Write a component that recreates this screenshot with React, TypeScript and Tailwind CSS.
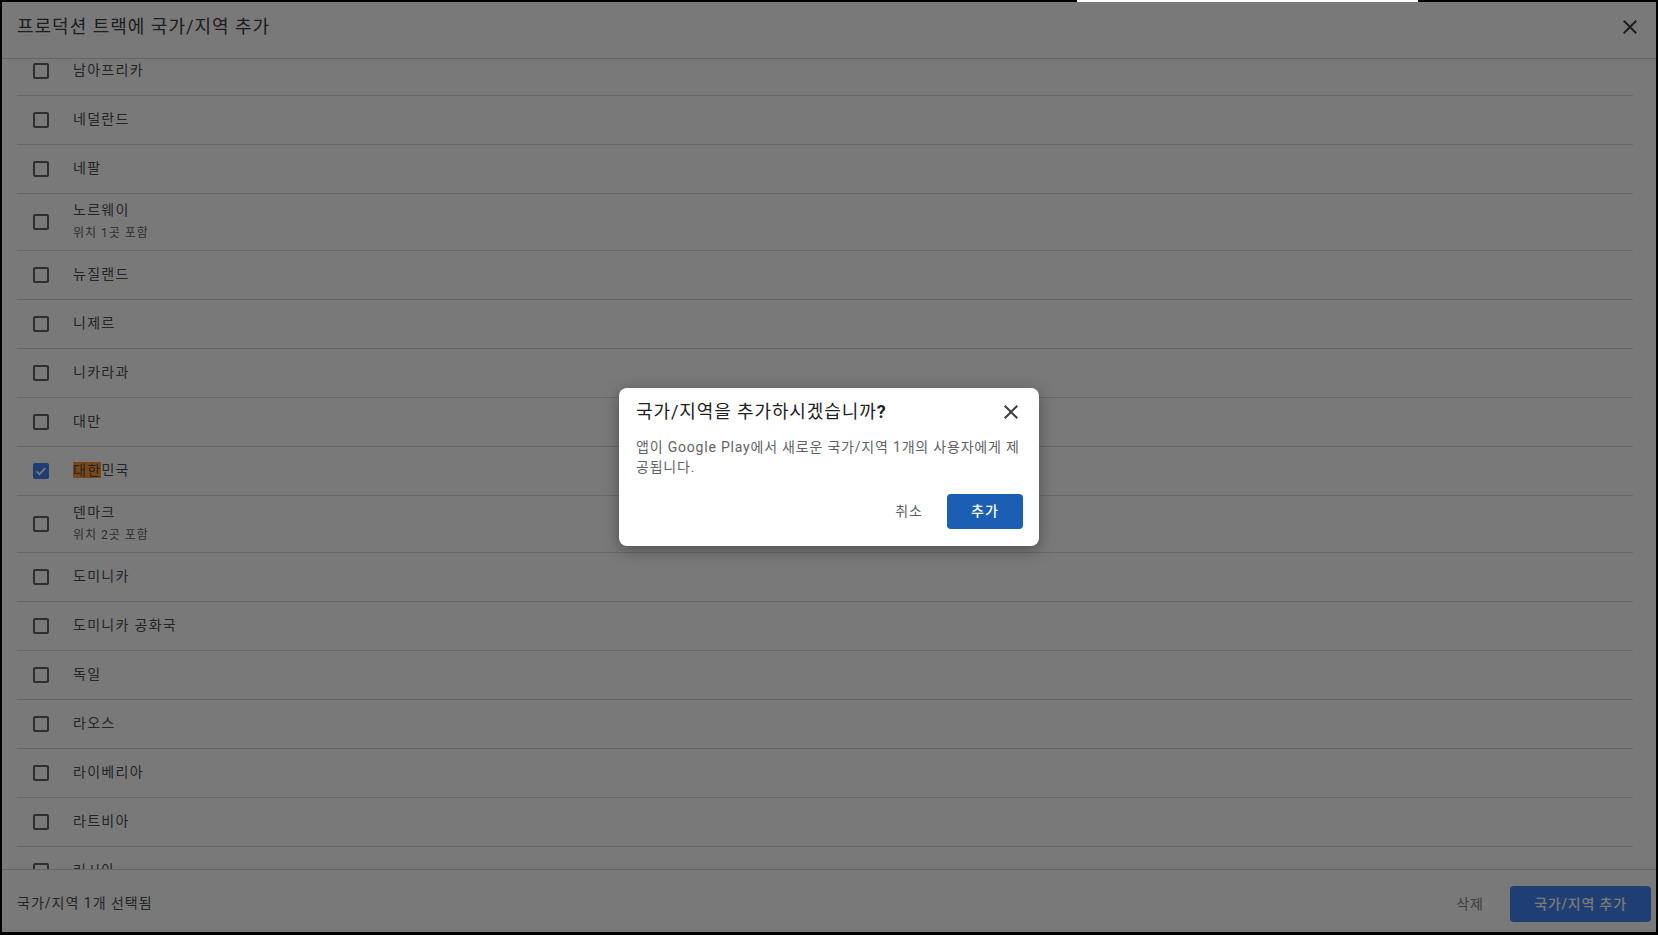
import React from 'react';

const FONT = 'font-[Roboto,"Noto_Sans_CJK_KR",sans-serif]';

type Row = { name: string; sub?: string; checked?: boolean; highlight?: number };

const rows: Row[] = [
  { name: '남아프리카' },
  { name: '네덜란드' },
  { name: '네팔' },
  { name: '노르웨이', sub: '위치 1곳 포함' },
  { name: '뉴질랜드' },
  { name: '니제르' },
  { name: '니카라과' },
  { name: '대만' },
  { name: '대한민국', checked: true, highlight: 2 },
  { name: '덴마크', sub: '위치 2곳 포함' },
  { name: '도미니카' },
  { name: '도미니카 공화국' },
  { name: '독일' },
  { name: '라오스' },
  { name: '라이베리아' },
  { name: '라트비아' },
  { name: '러시아' },
];

function CloseIcon(props: { className?: string }) {
  return (
    <svg viewBox="0 0 24 24" className={props.className} fill="currentColor">
      <path d="M19 6.41L17.59 5 12 10.59 6.41 5 5 6.41 10.59 12 5 17.59 6.41 19 12 13.41 17.59 19 19 17.59 13.41 12z" />
    </svg>
  );
}

function Checkbox(props: { checked?: boolean }) {
  if (props.checked) {
    return (
      <div className="flex h-4 w-4 shrink-0 items-center justify-center rounded-[2px] bg-[#4285f4]">
        <svg viewBox="0 0 24 24" className="h-[14px] w-[14px]" fill="none" stroke="white" strokeWidth="3">
          <path d="M4.5 12.5l5 5 10-10.5" />
        </svg>
      </div>
    );
  }
  return <div className="h-4 w-4 shrink-0 rounded-[2px] border-2 border-[#5f6368]" />;
}

function CountryRow({ row }: { row: Row }) {
  const label =
    row.highlight != null ? (
      <>
        <span className="bg-[#ff9632]">{row.name.slice(0, row.highlight)}</span>
        {row.name.slice(row.highlight)}
      </>
    ) : (
      row.name
    );
  return (
    <div
      className={`flex items-center border-b border-[#dadce0] ${row.sub ? 'h-[57px]' : 'h-[49px]'}`}
    >
      <div className="ml-4">
        <Checkbox checked={row.checked} />
      </div>
      <div className="mb-[2px] ml-6 flex flex-col">
        <div className="text-[14px] leading-5 tracking-[1.3px] text-[#4a4e52]">{label}</div>
        {row.sub ? (
          <div className="mt-[4px] text-[12px] leading-[18px] tracking-[1px] text-[#5f6368]">{row.sub}</div>
        ) : null}
      </div>
    </div>
  );
}

export default function App() {
  return (
    <div className={`relative h-[935px] w-[1658px] overflow-hidden bg-black pt-[2px] pr-[2px] pb-[3px] pl-[2px] ${FONT}`}>
      <div className="absolute top-0 left-[1077px] h-[2px] w-[341px] bg-white" />
      <div className="relative flex h-full w-full flex-col bg-white">
        {/* header */}
        <div className="flex h-[57px] shrink-0 items-start justify-between border-b border-[#d2d4d8] pt-[13px] pr-[14px] pl-[15px]">
          <div className="text-[18px] leading-6 tracking-[1px] text-[#3c4043]">프로덕션 트랙에 국가/지역 추가</div>
          <CloseIcon className="h-6 w-6 text-[#3c4043]" />
        </div>

        {/* list */}
        <div className="flex-1 overflow-hidden pr-[23px] pl-[15px]">
          <div className="-mt-[12px]">
            {rows.map((r) => (
              <CountryRow key={r.name} row={r} />
            ))}
          </div>
        </div>

        {/* footer */}
        <div className="flex h-[63px] shrink-0 items-start justify-between border-t border-[#d2d4d8] pt-[16px] pr-[5px] pl-[15px]">
          <div className="mt-[7px] text-[14px] leading-5 tracking-[1px] text-[#4a4e52]">국가/지역 1개 선택됨</div>
          <div className="flex items-start gap-[26px]">
            <div className="mt-[8px] text-[14px] leading-5 tracking-[1px] text-[#80868b]">삭제</div>
            <div className="flex h-9 w-[141px] items-center justify-center rounded-[4px] bg-[#4285f4] text-[14px] font-medium tracking-[0.8px] text-white">
              국가/지역 추가
            </div>
          </div>
        </div>

        {/* modal */}
        <div className="absolute inset-0 flex items-center justify-center bg-black/[0.525]">
          <div className="w-[420px] rounded-[8px] bg-white pt-3 pb-[17px] pl-[17px] shadow-[0_4px_16px_rgba(0,0,0,0.35)]">
            <div className="flex items-start justify-between pr-4">
              <div className="text-[18px] leading-6 tracking-[0.9px] text-[#202124]">
                국가/지역을 추가하시겠습니까<span className="font-bold">?</span>
              </div>
              <CloseIcon className="h-6 w-6 text-[#3c4043]" />
            </div>
            <div className="mt-[13px] pr-[10px] text-[14px] leading-5 tracking-[0.8px] text-[#5f6368]">
              앱이 Google Play에서 새로운 국가/지역 1개의 사용자에게 제공됩니다.
            </div>
            <div className="mt-[17px] flex items-center justify-end gap-[24px] pr-4">
              <div className="text-[14px] tracking-[1px] text-[#5f6368]">취소</div>
              <div className="flex h-[35px] w-[76px] items-center justify-center rounded-[4px] bg-[#1a5fb4] text-[14px] font-medium tracking-[1px] text-white">
                추가
              </div>
            </div>
          </div>
        </div>
      </div>
    </div>
  );
}
